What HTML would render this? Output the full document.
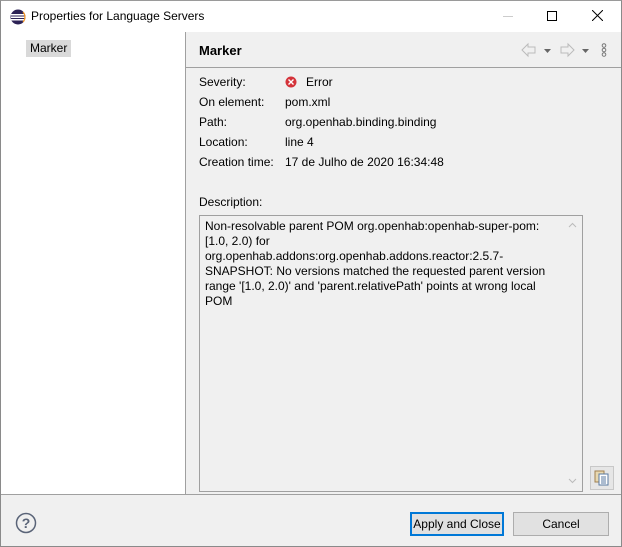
<!DOCTYPE html>
<html><head><style>
*{margin:0;padding:0;box-sizing:border-box}
body{width:622px;height:547px;overflow:hidden;font-family:"Liberation Sans",sans-serif;font-size:12px;color:#000;background:#f0f0f0;position:relative}
.abs{position:absolute}
.t{white-space:nowrap}
</style></head><body>
<div class="abs" style="left:0;top:0;width:622px;height:547px;border:1px solid #8a8a8a;border-top:1px solid #9a9a9a"></div>
<div class="abs" style="left:1px;top:1px;width:620px;height:31px;background:#fff"></div>
<svg class="abs" style="left:10px;top:9px" width="16" height="16" viewBox="0 0 16 16"><circle cx="8" cy="8" r="7.5" fill="#2c2255"/><rect x="1" y="5" width="14" height="1.5" fill="#fff"/><rect x="1" y="7.5" width="14" height="1.5" fill="#fff"/><rect x="1" y="10" width="14" height="1.5" fill="#fff"/><path d="M13 3a7.5 7.5 0 0 1 0 10" stroke="#f7941e" stroke-width="1.2" fill="none"/></svg>
<div class="abs t" style="left:31px;top:9px;font-size:12px">Properties for Language Servers</div>
<div class="abs" style="left:503px;top:16px;width:10px;height:1px;background:#ccc"></div>
<div class="abs" style="left:547px;top:11px;width:10px;height:10px;border:1px solid #000"></div>
<svg class="abs" style="left:592px;top:10px" width="11" height="11"><path d="M0 0L11 11M11 0L0 11" stroke="#000" stroke-width="1"/></svg>
<div class="abs" style="left:1px;top:32px;width:185px;height:462px;background:#fff"></div>
<div class="abs" style="left:185px;top:32px;width:1px;height:462px;background:#a0a0a0"></div>
<div class="abs t" style="left:26px;top:40px;width:45px;height:17px;background:#d9d9d9;padding:1px 4px">Marker</div>
<div class="abs t" style="left:199px;top:43px;font-weight:bold;font-size:13px">Marker</div>
<div class="abs" style="left:186px;top:67px;width:435px;height:1px;background:#a0a0a0"></div>
<svg class="abs" style="left:520px;top:42px" width="95" height="16"><path d="M2 8L8 2V5H15V11H8V14Z" fill="none" stroke="#bbb"/><path d="M24 7h7l-3.5 4z" fill="#666"/><path d="M54 8L48 2V5H41V11H48V14Z" fill="none" stroke="#bbb"/><path d="M62 7h7l-3.5 4z" fill="#666"/><circle cx="84" cy="3.5" r="1.8" fill="none" stroke="#777"/><circle cx="84" cy="8" r="1.8" fill="none" stroke="#777"/><circle cx="84" cy="12.5" r="1.8" fill="none" stroke="#777"/></svg>
<div class="abs t" style="left:199px;top:75px">Severity:</div>
<svg class="abs" style="left:285px;top:76px" width="12" height="12"><circle cx="6" cy="6" r="5.5" fill="#d4333a"/><path d="M3.5 3.5L8.5 8.5M8.5 3.5L3.5 8.5" stroke="#fff" stroke-width="1.4"/></svg>
<div class="abs t" style="left:306px;top:75px">Error</div>
<div class="abs t" style="left:199px;top:95px">On element:</div>
<div class="abs t" style="left:285px;top:95px">pom.xml</div>
<div class="abs t" style="left:199px;top:115px">Path:</div>
<div class="abs t" style="left:285px;top:115px">org.openhab.binding.binding</div>
<div class="abs t" style="left:199px;top:135px">Location:</div>
<div class="abs t" style="left:285px;top:135px">line 4</div>
<div class="abs t" style="left:199px;top:155px">Creation time:</div>
<div class="abs t" style="left:285px;top:155px">17 de Julho de 2020 16:34:48</div>
<div class="abs t" style="left:199px;top:195px">Description:</div>
<div class="abs" style="left:199px;top:215px;width:384px;height:277px;border:1px solid #a0a0a0;background:#f0f0f0"></div>
<div class="abs t" style="left:205px;top:219px;line-height:15px;font-size:12px">Non-resolvable parent POM org.openhab:openhab-super-pom:<br>[1.0, 2.0) for<br>org.openhab.addons:org.openhab.addons.reactor:2.5.7-<br>SNAPSHOT: No versions matched the requested parent version<br>range '[1.0, 2.0)' and 'parent.relativePath' points at wrong local<br>POM</div>
<svg class="abs" style="left:568px;top:222px" width="9" height="6"><path d="M1 5L4.5 1.5L8 5" stroke="#bbb" fill="none"/></svg>
<svg class="abs" style="left:568px;top:478px" width="9" height="6"><path d="M1 1L4.5 4.5L8 1" stroke="#bbb" fill="none"/></svg>
<div class="abs" style="left:590px;top:466px;width:24px;height:24px;border:1px solid #c8c8c8;background:#e6e6e6"></div>
<svg class="abs" style="left:594px;top:470px" width="16" height="16"><rect x="1" y="1" width="9" height="11" fill="#e8d8b0" stroke="#a08050"/><rect x="5" y="4" width="9" height="11" fill="#fff" stroke="#5a7aa0"/><path d="M7 7h5M7 9h5M7 11h5M7 13h5" stroke="#5a7aa0"/></svg>
<div class="abs" style="left:1px;top:494px;width:620px;height:1px;background:#a0a0a0"></div>
<svg class="abs" style="left:15px;top:512px" width="22" height="22"><circle cx="11" cy="11" r="9.5" fill="none" stroke="#5a6478" stroke-width="1.5"/><text x="11" y="16" text-anchor="middle" font-family="Liberation Sans" font-size="14" font-weight="bold" fill="#5a6478">?</text></svg>
<div class="abs" style="left:410px;top:512px;width:94px;height:24px;border:2px solid #0078d7;background:#e1e1e1;text-align:center;line-height:20px">Apply and Close</div>
<div class="abs" style="left:513px;top:512px;width:96px;height:24px;border:1px solid #adadad;background:#e1e1e1;text-align:center;line-height:22px">Cancel</div>
</body></html>
